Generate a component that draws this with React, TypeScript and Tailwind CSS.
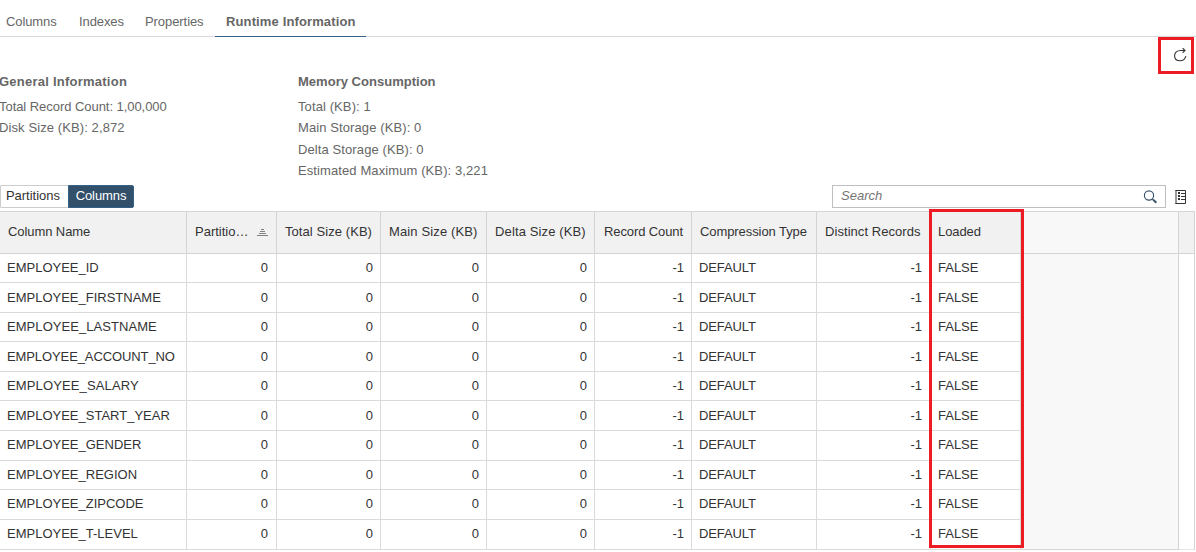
import React from "react";

type Column = { label: string; head: string; cell: string; value: string; sorted?: boolean };

const columns: Column[] = [
  { label: "Partitio…", head: "pl-2", cell: "justify-end pr-2", value: "0", sorted: true },
  { label: "Total Size (KB)", head: "pl-2 tracking-[0.07px]", cell: "justify-end pr-[7px]", value: "0" },
  { label: "Main Size (KB)", head: "pl-2 tracking-[0.13px]", cell: "justify-end pr-[7px]", value: "0" },
  { label: "Delta Size (KB)", head: "pl-2 tracking-[0.13px]", cell: "justify-end pr-[7px]", value: "0" },
  { label: "Record Count", head: "pl-[9px] tracking-[-0.1px]", cell: "justify-end pr-[7px]", value: "-1" },
  { label: "Compression Type", head: "pl-2 tracking-[-0.08px]", cell: "pl-[7px] tracking-[-0.1px]", value: "DEFAULT" },
  { label: "Distinct Records", head: "pl-2 tracking-[0.06px]", cell: "justify-end pr-2", value: "-1" },
  { label: "Loaded", head: "pl-[7px] tracking-[-0.1px]", cell: "pl-[7px]", value: "FALSE" },
];

const rows = [
  { name: "EMPLOYEE_ID", height: "h-[29px]", text: "" },
  { name: "EMPLOYEE_FIRSTNAME", height: "h-[30px]", text: "" },
  { name: "EMPLOYEE_LASTNAME", height: "h-[29px]", text: "tracking-[0.06px]" },
  { name: "EMPLOYEE_ACCOUNT_NO", height: "h-[30px]", text: "tracking-[-0.1px]" },
  { name: "EMPLOYEE_SALARY", height: "h-[29px]", text: "tracking-[0.13px]" },
  { name: "EMPLOYEE_START_YEAR", height: "h-[30px]", text: "" },
  { name: "EMPLOYEE_GENDER", height: "h-[30px]", text: "" },
  { name: "EMPLOYEE_REGION", height: "h-[29px]", text: "" },
  { name: "EMPLOYEE_ZIPCODE", height: "h-[30px]", text: "" },
  { name: "EMPLOYEE_T-LEVEL", height: "h-[30px]", text: "" },
];

const gridCols = "grid grid-cols-[187px_90px_104px_106px_108px_97px_125px_114px_90px_158px_15px]";

function Info({ title, lines, className, titleClass }: { title: string; lines: string[]; className: string; titleClass: string }) {
  return (
    <section className={className}>
      <h2 className={`mb-[6px] h-[17px] text-[13px] leading-[17px] font-bold ${titleClass}`}>{title}</h2>
      {lines.map((line) => (
        <p key={line} className={`h-[21.4px] text-[13px] leading-[21px] ${line.startsWith("Total Record") ? "tracking-[-0.05px]" : "tracking-[0.1px]"}`}>{line}</p>
      ))}
    </section>
  );
}

export default function App() {
  return (
    <main className="relative h-[552px] w-[1196px] overflow-hidden bg-white font-['Liberation_Sans',Arial,sans-serif] text-[13px] whitespace-nowrap text-[#333]">
      <nav className="flex h-[37px] border-b border-[#d9d9dc] pl-[6px] leading-[17px] text-[#666]">
        <span className="w-[73px] pt-[13px] tracking-[-0.1px]">Columns</span>
        <span className="w-[66px] pt-[13px] tracking-[-0.1px]">Indexes</span>
        <span className="w-[70px] pt-[13px] tracking-[-0.07px]">Properties</span>
        <span className="h-[37px] w-[151px] border-b border-[#346187] pt-[13px] pl-[11px] font-bold tracking-[0.13px]">Runtime Information</span>
      </nav>

      <div className="flex h-[148px] justify-between">
        <div className="flex pt-9 text-[#666]">
          <Info className="-ml-px w-[299px]" titleClass="tracking-[0.24px]" title="General Information" lines={["Total Record Count: 1,00,000", "Disk Size (KB): 2,872"]} />
          <Info className="" titleClass="tracking-[0.02px]" title="Memory Consumption" lines={["Total (KB): 1", "Main Storage (KB): 0", "Delta Storage (KB): 0", "Estimated Maximum (KB): 3,221"]} />
        </div>
        <button aria-label="Refresh" className="mr-[2px] h-[37px] w-9 border-[3px] border-[#ed1c24] pl-[12px]">
          <svg width="14" height="17" viewBox="0 0 14 17" fill="none" stroke="#333" strokeWidth="1.1">
            <path d="M12 3.5H7.8C3.9 3.5 1.6 5.6 1.6 8.8c0 3.1 2.2 5 5.3 5s5.3-1.9 6-4.6M9.6 1.2L12 3.5 9.6 5.8" />
          </svg>
        </button>
      </div>

      <div className="flex h-[26px] items-start">
        <button className="h-[23px] w-[68px] rounded-l-[2px] border border-r-0 border-[#ccc] pr-[3px] pb-[2px] leading-[19px]">Partitions</button>
        <button className="h-[23px] w-[66px] rounded-r-[2px] border border-[#346187] bg-[#325069] pb-[2px] leading-[19px] tracking-[-0.1px] text-white">Columns</button>
        <div className="ml-[698px] flex h-[23px] w-[334px] items-center justify-between border border-[#bfbfbf] px-2">
          <span className="pb-[2px] text-[#757575] italic">Search</span>
          <svg width="14" height="14" viewBox="0 0 14 14" fill="none" stroke="#325069" strokeWidth="1.1">
            <circle cx="6" cy="5.5" r="4.6" />
            <path d="M9.3 8.8l1.2 1.2" />
            <path d="M10.2 9.7l3.2 3" strokeWidth="1.9" />
          </svg>
        </div>
        <svg className="mt-[5px] ml-[9px]" width="12" height="14" viewBox="0 0 12 14">
          <path d="M.5.5h10v13H.5z" fill="white" stroke="#333" />
          <path d="M0 1h2v12H0z" fill="#999" />
          <path d="M3 2h2v2H3zM3 5h2v2H3zM3 8h2v2H3zM6 3h4v1H6zM6 6h4v1H6zM6 9h4v1H6z" fill="#333" />
        </svg>
      </div>

      <div className="w-[1195px] border-t border-r border-[#d4d4d4]">
        <div className={`${gridCols} h-[42px]`}>
          <div className="flex items-center border-r border-b border-[#d4d4d4] bg-[#f1f1f1] pb-px pl-2 tracking-[-0.08px]">Column Name</div>
          {columns.map((c) => (
            <div key={c.label} className={`flex items-center border-r border-b border-[#d4d4d4] bg-[#f1f1f1] pb-px ${c.head}`}>
              {c.label}
              {c.sorted && (
                <svg className="mt-px ml-[9px]" width="11" height="7" viewBox="0 0 11 7" fill="#808080" shapeRendering="crispEdges">
                  <path d="M4 0h3v1H4zM3 2h5v1H3zM2 4h7v1H2zM0 6h11v1H0z" />
                </svg>
              )}
            </div>
          ))}
          <div className="border-r border-b border-[#d4d4d4] bg-[#f8f8f8]" />
          <div className="border-b border-[#d4d4d4] bg-[#f1f1f1]" />
        </div>
        {rows.map((row, i) => {
          const shift = i > 5 ? (i === 7 ? "pb-px" : "pb-[2px]") : "";
          return (
            <div key={row.name} className={`${gridCols} ${row.height}`}>
              <div className={`flex items-center border-r border-b border-[#dadada] pl-[7px] ${shift} ${row.text}`}>{row.name}</div>
              {columns.map((c) => (
                <div key={c.label} className={`flex items-center border-r border-b border-[#dadada] ${shift} ${c.cell}`}>{c.value}</div>
              ))}
              <div className={`border-r border-[#d4d4d4] bg-[#f8f8f8] ${i === 9 ? "border-b" : ""}`} />
              <div className={i === 9 ? "border-b border-[#e5e5e5]" : ""} />
            </div>
          );
        })}
      </div>
      <div className="pointer-events-none absolute top-[209px] left-[929px] h-[339px] w-[95px] border-[3px] border-[#ed1c24]" />
    </main>
  );
}
